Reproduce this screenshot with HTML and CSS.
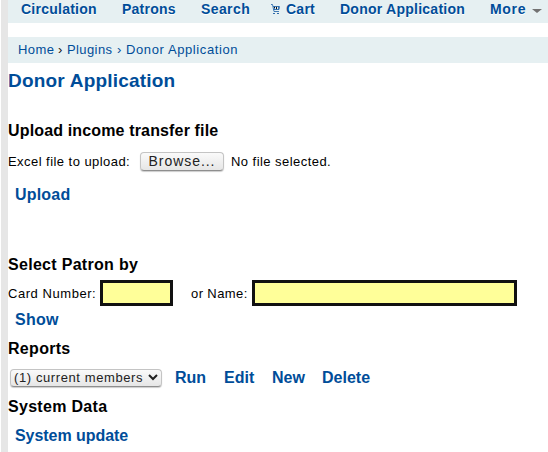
FILE: index.html
```html
<!DOCTYPE html>
<html lang="en">
<head>
<meta charset="utf-8">
<title>Donor Application</title>
<link rel="stylesheet" href="styles.css">
</head>
<body>
<div class="page">
<nav class="menu">
<a class="m-circulation">Circulation</a><a class="m-patrons">Patrons</a><a class="m-search">Search</a><svg class="cart" width="9" height="10" viewBox="0 0 9 10"><path d="M0 .5h1.5L3 7.5h5M2 2.5h6.5L8 5.5H2.5M3.5 2v4M5.5 2v4M7.5 2v4" fill="none" stroke="#2e6bab" stroke-width=".9"/><path d="M3 3h1v1H3zM5 3h1v2H5z" fill="#111"/><path d="M2 9h2v1H2zM6 9h2v1H6z" fill="#2e6bab"/></svg><a class="m-cart">Cart</a><a class="m-donor">Donor Application</a><a class="m-more">More</a><span class="caret"></span>
</nav>
<div class="crumbs"><a class="c-home">Home</a><span class="c-sep dark">›</span><a class="c-plugins">Plugins</a><a class="c-sep">›</a><a class="c-donor">Donor Application</a></div>
<h1>Donor Application</h1>
<h2 class="h-upload">Upload income transfer file</h2>
<div class="row file-row"><label class="l-file">Excel file to upload:</label><button class="browse">Browse...</button><span class="l-none">No file selected.</span></div>
<div class="row upload-row"><a class="act a-upload">Upload</a></div>
<h2 class="h-patron">Select Patron by</h2>
<div class="row patron-row"><label class="l-card">Card Number:</label><input class="card"><label class="l-name">or Name:</label><input class="name"></div>
<div class="row show-row"><a class="act a-show">Show</a></div>
<h2 class="h-reports">Reports</h2>
<div class="row report-row"><button class="select"><span>(1) current members</span><svg width="10" height="7" viewBox="0 0 10 7"><path d="M1 1l4 4 4-4" fill="none" stroke="#222" stroke-width="2"/></svg></button><a class="act a-run">Run</a><a class="act a-edit">Edit</a><a class="act a-new">New</a><a class="act a-delete">Delete</a></div>
<h2 class="h-system">System Data</h2>
<div class="row system-row"><a class="act a-system">System update</a></div>
</div>
</body>
</html>
```

FILE: styles.css
```css
* { box-sizing: border-box; }
body { margin: 0; background: #fff; color: #000; font: 13px "Liberation Sans", Arial, sans-serif; overflow: hidden; }
.page { margin-left: 1px; border-left: 7px solid #e6e6e6; height: 452px; white-space: nowrap; }
a, h1 { color: #004d99; }
.menu { display: flex; height: 23px; background: #e6f0f2; padding-left: 13px; font-weight: bold; font-size: 14px; line-height: 18px; letter-spacing: .25px; text-shadow: 0 1px #fff; }
.m-circulation { width: 101px; }
.m-patrons { width: 79px; }
.m-search { width: 70px; letter-spacing: .4px; }
.cart { width: 9px; margin: 4px 6px 0 0; }
.m-cart { width: 54px; }
.m-donor { width: 150px; }
.m-more { width: 42px; letter-spacing: .7px; }
.caret { width: 0; height: 0; margin-top: 9px; border: 5px solid transparent; border-top: 4px solid #727272; border-bottom: 0; }
.crumbs { display: flex; height: 26px; margin-top: 14px; padding-left: 10px; background: #e6f0f2; line-height: 25px; letter-spacing: .4px; }
.c-home { width: 40px; }
.c-plugins { width: 50px; }
.c-sep { width: 9px; }
.c-donor { letter-spacing: .6px; }
.dark { color: #111; }
h1, h2 { margin: 0; }
h1 { height: 56px; font-size: 19px; line-height: 36px; letter-spacing: .2px; }
h2 { font-size: 16px; line-height: 22px; height: 22px; letter-spacing: .3px; }
.h-upload { line-height: 24px; letter-spacing: .15px; }
.row { display: flex; align-items: center; }
.file-row { height: 40px; }
.l-file { width: 132px; letter-spacing: .45px; }
.browse, .select { border: 1px solid #c4c4c4; border-bottom-color: #8e8e8e; border-radius: 4px; background: linear-gradient(#fafafa, #e6e6e6); color: #222; padding: 0; font: 14px "Liberation Sans", Arial, sans-serif; box-shadow: 0 1px 1px #ccc; }
.browse { width: 84px; height: 19px; margin-right: 7px; letter-spacing: .95px; line-height: 17px; }
.l-none { letter-spacing: .45px; }
.upload-row { height: 28px; }
.act { font-weight: bold; font-size: 16px; }
.a-upload, .a-show, .a-system { margin-left: 7px; }
.a-upload { letter-spacing: .2px; }
.a-show { letter-spacing: .3px; }
.h-patron { margin-top: 45px; }
.patron-row { height: 34px; }
.patron-row input { height: 26px; border: 3px solid #111; background: #ff9; padding: 0; margin: 0; }
.l-card { width: 92px; letter-spacing: .55px; }
.card { width: 73px; }
.l-name { width: 61px; margin-left: 18px; letter-spacing: .4px; }
.name { width: 265px; }
.show-row { height: 20px; }
.h-reports { margin-top: 8px; }
.report-row { height: 35px; }
.select { width: 152px; height: 18px; margin: 0 13px 0 2px; padding: 0 3px; display: flex; align-items: center; justify-content: space-between; font-size: 13px; letter-spacing: .6px; }
.a-run { width: 49px; }
.a-edit { width: 48px; }
.a-new { width: 50px; }
.h-system { margin-top: 1px; }
.system-row { height: 36px; }
.a-system { letter-spacing: -.05px; }
```
